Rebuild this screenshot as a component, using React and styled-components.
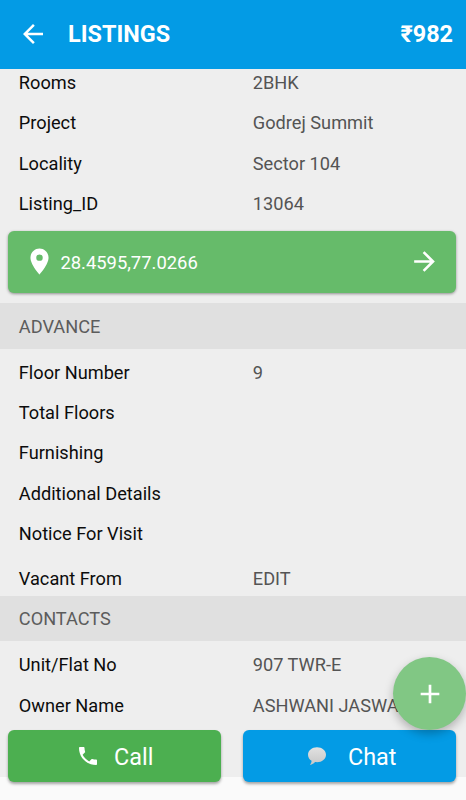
import React from "react";
import styled, { createGlobalStyle } from "styled-components";

const property = [
  { label: "Rooms", value: "2BHK" },
  { label: "Project", value: "Godrej Summit" },
  { label: "Locality", value: "Sector 104" },
  { label: "Listing_ID", value: "13064" },
];

const advance = [
  { label: "Floor Number", value: "9" },
  { label: "Total Floors" },
  { label: "Furnishing" },
  { label: "Additional Details" },
  { label: "Notice For Visit" },
];

const contacts = [
  { label: "Unit/Flat No", value: "907 TWR-E" },
  { label: "Owner Name", value: "ASHWANI JASWAL" },
];

const GlobalStyle = createGlobalStyle`
  * {
    box-sizing: border-box;
  }

  body {
    margin: 0;
    background: #fafafa;
    font-family: Roboto, sans-serif;
  }
`;

const Screen = styled.div`
  position: relative;
  height: 800px;
  display: flex;
  flex-direction: column;
  overflow: hidden;
  background: #fafafa;
`;

const Header = styled.header`
  flex: none;
  height: 69px;
  padding: 0 13px 2px 18px;
  display: flex;
  align-items: center;
  background: #039be5;
  color: white;
  z-index: 1;
`;

const Title = styled.h1`
  flex: 1;
  margin: 0 0 0 20px;
  font-size: 23.4px;
  font-weight: 700;
`;

const Price = styled.span`
  font-size: 23.4px;
  font-weight: 700;
`;

const Icon = styled.svg`
  flex: none;
  width: ${(props) => props.$size}px;
  height: ${(props) => props.$size}px;
  fill: currentColor;
`;

const Content = styled.main`
  height: 708px;
  overflow: hidden;
  background: #eeeeee;
`;

const List = styled.div`
  margin-top: ${(props) => props.$offset}px;
`;

const Row = styled.div`
  height: 40.33px;
  padding-left: 18.8px;
  display: grid;
  grid-template-columns: 234px 1fr;
  align-items: center;
  font-size: 18.2px;
  white-space: nowrap;
`;

const DateRow = styled(Row)`
  height: 42.2px;
  padding-top: 8px;
`;

const Label = styled.span`
  color: #0c0c0c;
`;

const Value = styled.span`
  color: #545454;
`;

const Location = styled.button`
  width: 448px;
  height: 62px;
  margin: 7.2px 8px 10.5px;
  padding: 0 16px;
  border: none;
  border-radius: 6px;
  display: flex;
  align-items: center;
  background: #66bb6a;
  color: white;
  font: 400 18.4px Roboto, sans-serif;
  box-shadow: 0 1px 3px rgba(0, 0, 0, 0.4);
`;

const Coordinates = styled.span`
  flex: 1;
  margin-left: 5.4px;
  padding-top: 1px;
  text-align: left;
`;

const SectionTitle = styled.h2`
  height: 45.3px;
  margin: 0;
  padding: 1px 0 0 18.8px;
  display: flex;
  align-items: center;
  background: #e0e0e0;
  color: #5c5c5c;
  font-size: 18.2px;
  font-weight: 400;
`;

const Dock = styled.footer`
  position: absolute;
  left: 8px;
  right: 10.5px;
  bottom: 18px;
  display: grid;
  grid-template-columns: 213px 213px;
  justify-content: space-between;
`;

const Action = styled.button`
  height: 52px;
  padding: 0 0 0 ${(props) => props.$indent}px;
  border: none;
  border-radius: 6px;
  display: flex;
  align-items: center;
  gap: ${(props) => props.$gap}px;
  background: ${(props) => props.$color};
  color: white;
  font: 400 23.4px Roboto, sans-serif;
  box-shadow: 0 2px 3px rgba(0, 0, 0, 0.35);

  span {
    padding-top: 2px;
  }
`;

const AddButton = styled.button`
  position: absolute;
  right: 0;
  top: 657px;
  width: 73px;
  height: 73px;
  padding: 0;
  border: none;
  border-radius: 50%;
  display: flex;
  align-items: center;
  justify-content: center;
  background: #81c784;
  color: white;
  box-shadow: 0 4px 10px rgba(0, 0, 0, 0.26);
`;

const Rows = ({ items }) =>
  items.map((item) => (
    <Row key={item.label}>
      <Label>{item.label}</Label>
      <Value>{item.value}</Value>
    </Row>
  ));

const App = () => {
  return (
    <Screen>
      <GlobalStyle />
      <Header>
        <Icon $size={30} viewBox="0 0 24 24">
          <path d="M20 11H7.83l5.59-5.59L12 4l-8 8 8 8 1.41-1.41L7.83 13H20v-2z" />
        </Icon>
        <Title>LISTINGS</Title>
        <Price>₹982</Price>
      </Header>
      <Content>
        <List $offset={-6.8}>
          <Rows items={property} />
        </List>
        <Location>
          <Icon $size={31} viewBox="0 0 24 24">
            <path d="M12 2C8.13 2 5 5.13 5 9c0 5.25 7 13 7 13s7-7.75 7-13c0-3.87-3.13-7-7-7zm0 9.5a2.5 2.5 0 1 1 0-5 2.5 2.5 0 0 1 0 5z" />
          </Icon>
          <Coordinates>28.4595,77.0266</Coordinates>
          <Icon $size={31} viewBox="0 0 24 24">
            <path d="M12 4l-1.41 1.41L16.17 11H4v2h12.17l-5.58 5.59L12 20l8-8z" />
          </Icon>
        </Location>
        <SectionTitle>ADVANCE</SectionTitle>
        <List $offset={3.5}>
          <Rows items={advance} />
          <DateRow>
            <Label>Vacant From</Label>
            <Value>EDIT</Value>
          </DateRow>
        </List>
        <SectionTitle>CONTACTS</SectionTitle>
        <List $offset={3.7}>
          <Rows items={contacts} />
        </List>
      </Content>
      <Dock>
        <Action $color="#4caf50" $indent={67.5} $gap={14.5}>
          <Icon $size={24} viewBox="0 0 24 24">
            <path d="M6.62 10.79c1.44 2.83 3.76 5.14 6.59 6.59l2.2-2.2c.27-.27.67-.36 1.02-.24 1.12.37 2.33.57 3.57.57.55 0 1 .45 1 1V20c0 .55-.45 1-1 1-9.39 0-17-7.61-17-17 0-.55.45-1 1-1h3.5c.55 0 1 .45 1 1 0 1.25.2 2.45.57 3.57.11.35.03.74-.25 1.02l-2.2 2.2z" />
          </Icon>
          <span>Call</span>
        </Action>
        <Action $color="#039be5" $indent={62.5} $gap={19}>
          <Icon $size={24} viewBox="0 0 24 24">
            <defs>
              <linearGradient id="bubble" x1="0" y1="0" x2="0" y2="1">
                <stop offset="0" stopColor="#e2e2e2" />
                <stop offset="1" stopColor="#c6c6c6" />
              </linearGradient>
            </defs>
            <path
              fill="url(#bubble)"
              d="M12 3.2c-5 0-9 3.3-9 7.5 0 2.5 1.3 4.7 3.6 6.1-.1 1.5-.7 2.8-1.7 4.2 2.4-.5 4.1-1.5 5.2-2.9.6.1 1.2.1 1.9.1 5 0 9-3.3 9-7.5s-4-7.5-9-7.5z"
            />
          </Icon>
          <span>Chat</span>
        </Action>
      </Dock>
      <AddButton>
        <Icon $size={32} viewBox="0 0 24 24">
          <path d="M19 13h-6v6h-2v-6H5v-2h6V5h2v6h6v2z" />
        </Icon>
      </AddButton>
    </Screen>
  );
};

export default App;
